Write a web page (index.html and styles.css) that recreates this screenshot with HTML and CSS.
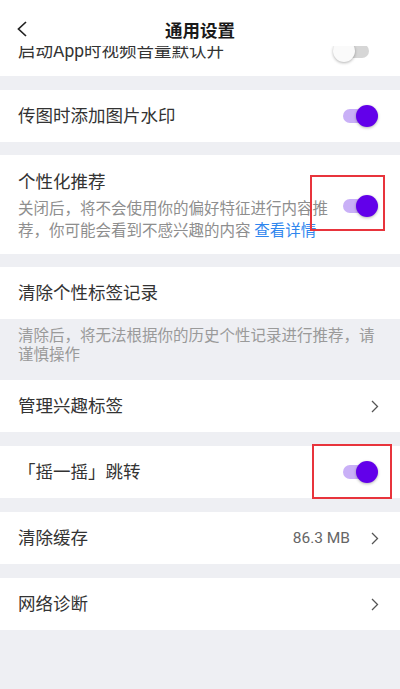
FILE: index.html
```html
<!DOCTYPE html>
<html lang="zh-CN">
<head>
    <meta charset="UTF-8">
    <meta name="viewport" content="width=device-width, initial-scale=1.0">
    <title>通用设置</title>
    <link rel="stylesheet" href="styles.css">
</head>
<body>
    <div class="header">
        <svg class="back" width="12" height="16" viewBox="0 0 12 16">
            <path d="M10 1 L2.5 8 L10 15" fill="none" stroke="#222" stroke-width="1.7"/>
        </svg>
        <h1 class="title">通用设置</h1>
        <span class="header-side"></span>
    </div>

    <div class="scroll">
        <!-- first row is scrolled half under the header -->
        <div class="row row-first">
            <span class="label">启动App时视频音量默认开</span>
            <span class="switch off"></span>
        </div>

        <div class="row group">
            <span class="label">传图时添加图片水印</span>
            <span class="switch"></span>
        </div>

        <div class="row row-tall group-sm">
            <div class="text">
                <p class="label">个性化推荐</p>
                <p class="desc">关闭后，将不会使用你的偏好特征进行内容推荐，你可能会看到不感兴趣的内容 <a class="link">查看详情</a></p>
            </div>
            <span class="switch"><span class="mark mark-a"></span></span>
        </div>

        <div class="row group-sm">
            <span class="label">清除个性标签记录</span>
        </div>
        <p class="note">清除后，将无法根据你的历史个性记录进行推荐，请谨慎操作</p>
        <div class="row">
            <span class="label">管理兴趣标签</span>
            <svg class="chevron" width="8" height="13" viewBox="0 0 8 13">
                <path d="M1 1 L6.5 6.5 L1 12" fill="none" stroke="#555" stroke-width="1.3"/>
            </svg>
        </div>

        <div class="row group">
            <span class="label">「摇一摇」跳转</span>
            <span class="switch"><span class="mark mark-b"></span></span>
        </div>

        <div class="row group">
            <span class="label">清除缓存</span>
            <span class="value">86.3 MB</span>
            <svg class="chevron" width="8" height="13" viewBox="0 0 8 13">
                <path d="M1 1 L6.5 6.5 L1 12" fill="none" stroke="#555" stroke-width="1.3"/>
            </svg>
        </div>

        <div class="row group">
            <span class="label">网络诊断</span>
            <svg class="chevron" width="8" height="13" viewBox="0 0 8 13">
                <path d="M1 1 L6.5 6.5 L1 12" fill="none" stroke="#555" stroke-width="1.3"/>
            </svg>
        </div>
    </div>
</body>
</html>
```

FILE: styles.css
```css
body {
    margin: 0;
    background-color: #eeeff3;
    font-family: Roboto, "Noto Sans CJK SC", sans-serif;
    color: #333;
}

.header {
    display: grid;
    grid-template-columns: 50px 1fr 50px;
    align-items: center;
    height: 46px;
    padding-top: 12px;
    box-sizing: border-box;
    background-color: #fff;
}

.back {
    margin-left: 16px;
}

.title {
    margin: 0;
    text-align: center;
    font-size: 17.5px;
    font-weight: bold;
    color: #1a1a1a;
}

.scroll {
    display: flex;
    flex-direction: column;
    height: 643px;
    overflow: hidden;
}

.row {
    display: flex;
    align-items: center;
    height: 52px;
    flex-shrink: 0;
    padding: 0 21px 0 18px;
    background-color: #fff;
}

.row-first {
    height: 50px;
    margin-top: -20px;
}

.group {
    margin-top: 14px;
}

.group-sm {
    margin-top: 13px;
}

.label {
    flex: 1;
    margin: 0;
    font-size: 17.5px;
    line-height: 26px;
    color: #333;
}

.row-tall {
    height: auto;
    padding-top: 14px;
    padding-bottom: 12px;
}

.text {
    flex: 1;
}

.desc {
    width: 318px;
    margin: 3px 0 0;
    font-size: 15.5px;
    line-height: 22px;
    color: #8e8e8e;
}

.link {
    color: #2f86ee;
}

.note {
    margin: 0;
    padding: 8px 18px 15px;
    font-size: 15.5px;
    line-height: 19px;
    color: #9a9a9a;
    background-color: #eeeff3;
}

.value {
    margin-right: 21px;
    font-size: 15.5px;
    color: #666;
}

/* material style switch */
.switch {
    position: relative;
    width: 35px;
    height: 22px;
    margin-right: 1px;
}

.switch::before {
    content: "";
    position: absolute;
    left: 0;
    top: 4px;
    width: 32px;
    height: 14px;
    border-radius: 7px;
    background-color: #c9b0f7;
}

.switch::after {
    content: "";
    position: absolute;
    right: 0;
    top: 0;
    width: 22px;
    height: 22px;
    border-radius: 50%;
    background-color: #6200ea;
    box-shadow: 0 1px 3px rgba(0, 0, 0, 0.3);
}

.switch.off {
    width: 36px;
    margin-right: 10px;
}

.switch.off::before {
    left: 4px;
    background-color: #d6d6d6;
}

.switch.off::after {
    left: 0;
    right: auto;
    background-color: #fafafa;
}

/* red annotation boxes */
.mark {
    position: absolute;
    border: 2px solid #e8343c;
}

.mark-a {
    left: -33px;
    right: -7px;
    top: -20px;
    bottom: -14px;
}

.mark-b {
    left: -31px;
    right: -14px;
    top: -17px;
    bottom: -16px;
}
```
